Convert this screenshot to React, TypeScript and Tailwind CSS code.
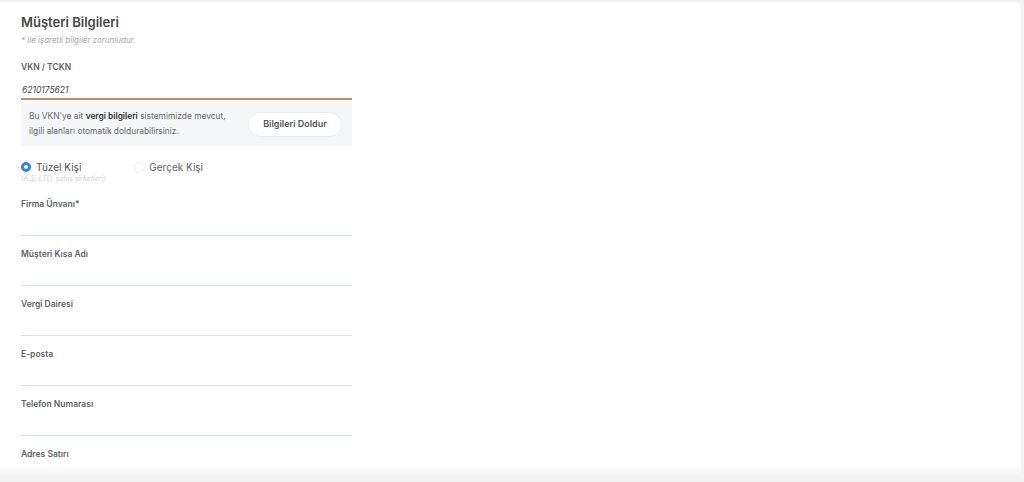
import React from "react";

const font = { fontFamily: "Inter, 'Noto Sans', sans-serif" };

function Field({ label }: { label: string }) {
  return (
    <div className="flex flex-col h-[50px]">
      <div className="pt-[9px] text-[8.5px] font-semibold text-[#5f6368] leading-[10px]">{label}</div>
      <div className="flex-1" />
      <div className="h-px bg-[#d3e6e4] mb-[4px]" />
    </div>
  );
}

export default function App() {
  return (
    <div className="w-[1024px] h-[482px] bg-[#f3f3f3] overflow-hidden" style={font}>
      <div className="relative ml-0 mt-[2px] w-[1021px] h-[476px] bg-white rounded-tr-[6px] overflow-hidden">
        <div className="pl-[21px] w-[352px] box-content pt-[12px]">
          <div className="text-[13px] font-semibold text-[#474747] leading-[16px]">Müşteri Bilgileri</div>
          <div className="mt-[6px] text-[8px] italic text-[#a8a8a8] leading-[8px]">* ile işaretli bilgiler zorunludur.</div>
          <div className="mt-[18px] text-[8.5px] font-semibold text-[#5f6368] leading-[10px]">VKN / TCKN</div>
          <div className="mt-[13px] text-[8.5px] italic text-[#444] leading-[10px] pl-[1px]">6210175621</div>
          <div className="mt-[3px] h-[2px] bg-[#c88a6d] w-[331px]" />
          <div className="mt-[2px] w-[331px] h-[44px] bg-[#f5f6f7] flex items-center justify-between pl-[8px] pr-[10px]">
            <div className="text-[8.4px] text-[#6a6a6a] leading-[15px]">
              Bu VKN'ye ait <span className="font-semibold text-[#333]">vergi bilgileri</span> sistemimizde mevcut,
              <br />
              ilgili alanları otomatik doldurabilirsiniz.
            </div>
            <div className="h-[25px] w-[94px] bg-white rounded-full border border-[#ececec] flex items-center justify-center text-[9px] font-semibold text-[#555]">
              Bilgileri Doldur
            </div>
          </div>
          <div className="mt-[15px] flex items-center h-[12px]">
            <div className="w-[10px] h-[10px] rounded-full border-[3px] border-[#3a82d6] bg-white" />
            <div className="ml-[5px] text-[10px] text-[#555] leading-[12px]">Tüzel Kişi</div>
            <div className="ml-[53px] w-[11px] h-[11px] rounded-full border border-[#eeeeee] bg-white" />
            <div className="ml-[4px] text-[10px] text-[#666] leading-[12px]">Gerçek Kişi</div>
          </div>
          <div className="mt-[2px] text-[7px] italic text-[#d0d0d0] leading-[8px]">(A.Ş. LTD, şahıs şirketleri)</div>
          <div className="w-[331px] mt-[7px]">
            <Field label="Firma Ünvanı*" />
            <Field label="Müşteri Kısa Adı" />
            <Field label="Vergi Dairesi" />
            <Field label="E-posta" />
            <Field label="Telefon Numarası" />
            <div className="pt-[9px] text-[8.5px] font-semibold text-[#5f6368] leading-[10px]">Adres Satırı</div>
          </div>
        </div>
        <div className="absolute left-0 right-0 bottom-0 h-[14px] bg-gradient-to-b from-transparent to-[#f0f0f0]" />
      </div>
    </div>
  );
}
